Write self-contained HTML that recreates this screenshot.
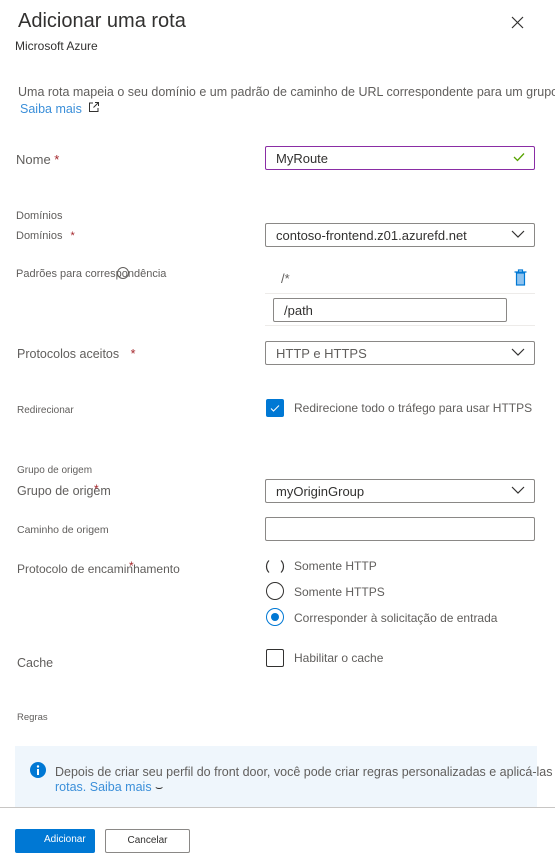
<!DOCTYPE html>
<html><head><meta charset="utf-8"><style>
*{margin:0;padding:0;box-sizing:border-box}
body{width:555px;height:868px;overflow:hidden;background:#fff;font-family:"Liberation Sans",sans-serif;color:#323130;position:relative}
.a{position:absolute;white-space:nowrap}
.lbl{color:#605e5c;font-size:12px}
.req{color:#a4262c}
.box{position:absolute;left:265px;width:270px;height:24px;border:1px solid #8a8886;border-radius:2px;font-size:13px;color:#323130;padding:5px 10px;line-height:14px}
.chev{position:absolute;right:9px;top:6px}
.radio{position:absolute;left:266px;width:18px;height:18px;border:1px solid #323130;border-radius:50%}
.rt{position:absolute;left:294px;font-size:12px;color:#605e5c}
</style></head><body>
<div class="a" style="left:18px;top:10px;font-size:20px;color:#323130">Adicionar uma rota</div>
<svg class="a" style="left:511px;top:16px" width="13" height="13"><path d="M1 1L12 12M12 1L1 12" stroke="#323130" stroke-width="1.2"/></svg>
<div class="a" style="left:15px;top:39px;font-size:12px;color:#323130">Microsoft Azure</div>
<div class="a" style="left:18px;top:85px;font-size:12.5px;color:#605e5c">Uma rota mapeia o seu domínio e um padrão de caminho de URL correspondente para um grupo</div>
<div class="a" style="left:20px;top:102px;font-size:12.5px;color:#3b8fd9">Saiba mais</div>
<svg class="a" style="left:88px;top:101px" width="12" height="12"><path d="M5 2H1.5V10.5H10V7M7 1.5H10.5V5M10.5 1.5L5.5 6.5" stroke="#323130" fill="none" stroke-width="1"/></svg>

<div class="a" style="left:16px;top:152px;font-size:13px;color:#605e5c">Nome <span class="req">*</span></div>
<div class="box" style="top:146px;border-color:#8a2da5">MyRoute<svg class="chev" style="top:5px" width="12" height="10"><path d="M1 5L4.5 8.5L11 1.5" stroke="#57a300" fill="none" stroke-width="1.3"/></svg></div>

<div class="a lbl" style="left:16px;top:210px;font-size:11px">Domínios</div>
<div class="a lbl" style="left:16px;top:230px;font-size:11px">Domínios <span class="req" style="margin-left:5px">*</span></div>
<div class="box" style="top:223px">contoso-frontend.z01.azurefd.net<svg class="chev" width="14" height="9"><path d="M1 1L7 7L13 1" stroke="#323130" fill="none" stroke-width="1.2"/></svg></div>

<div class="a lbl" style="left:16px;top:268px;font-size:11px">Padrões para correspondência</div>
<div class="a" style="left:117px;top:267px;width:12px;height:12px;border:1px solid #605e5c;border-radius:50%"></div>
<div class="a" style="left:281px;top:271px;font-size:13px;color:#605e5c">/*</div>
<svg class="a" style="left:514px;top:269px" width="13" height="17"><rect x="2.5" y="4" width="8" height="12" fill="#8fc3ef" stroke="#0078d4" stroke-width="1.2"/><path d="M0.5 3H12.5M4.5 3V1H8.5V3" stroke="#0078d4" fill="none" stroke-width="1.2"/></svg>
<div class="a" style="left:265px;top:293px;width:270px;height:1px;background:#edebe9"></div>
<div class="box" style="left:273px;width:234px;top:298px">/path</div>
<div class="a" style="left:265px;top:325px;width:270px;height:1px;background:#edebe9"></div>

<div class="a" style="left:17px;top:347px;font-size:12.5px;color:#605e5c">Protocolos aceitos <span class="req" style="margin-left:8px">*</span></div>
<div class="box" style="top:341px;color:#605e5c">HTTP e HTTPS<svg class="chev" width="14" height="9"><path d="M1 1L7 7L13 1" stroke="#323130" fill="none" stroke-width="1.2"/></svg></div>

<div class="a lbl" style="left:17px;top:405px;font-size:10px">Redirecionar</div>
<div class="a" style="left:266px;top:399px;width:18px;height:18px;background:#0078d4;border-radius:2px"><svg width="18" height="18"><path d="M5 9.5L7.5 12L13 6.5" stroke="#fff" fill="none" stroke-width="1"/></svg></div>
<div class="rt" style="top:401px">Redirecione todo o tráfego para usar HTTPS</div>

<div class="a lbl" style="left:17px;top:465px;font-size:10px">Grupo de origem</div>
<div class="a" style="left:17px;top:484px;font-size:12.5px;color:#605e5c">Grupo de origem</div>
<div class="a req" style="left:94px;top:482px;font-size:12px">*</div>
<div class="box" style="top:479px">myOriginGroup<svg class="chev" width="14" height="9"><path d="M1 1L7 7L13 1" stroke="#323130" fill="none" stroke-width="1.2"/></svg></div>

<div class="a lbl" style="left:17px;top:524px;font-size:10.5px">Caminho de origem</div>
<div class="box" style="top:517px"></div>

<div class="a" style="left:17px;top:562px;font-size:12px;color:#605e5c">Protocolo de encaminhamento</div>
<div class="a req" style="left:129px;top:559px;font-size:12px">*</div>
<svg class="a" style="left:265px;top:557px" width="20" height="20"><path d="M4 3.5A8.5 8.5 0 0 0 4 15.5M16 3.5A8.5 8.5 0 0 1 16 15.5" stroke="#323130" fill="none" stroke-width="1.2"/></svg>
<div class="rt" style="top:559px">Somente HTTP</div>
<div class="radio" style="top:582px"></div>
<div class="rt" style="top:585px">Somente HTTPS</div>
<div class="radio" style="top:608px;border-color:#0078d4"><div style="position:absolute;left:4px;top:4px;width:8px;height:8px;border-radius:50%;background:#0078d4"></div></div>
<div class="rt" style="top:611px">Corresponder à solicitação de entrada</div>

<div class="a" style="left:17px;top:656px;font-size:12.5px;color:#605e5c">Cache</div>
<div class="a" style="left:266px;top:649px;width:18px;height:18px;border:1px solid #323130;border-radius:2px"></div>
<div class="rt" style="top:651px">Habilitar o cache</div>

<div class="a lbl" style="left:17px;top:712px;font-size:9.5px">Regras</div>
<div class="a" style="left:15px;top:746px;width:522px;height:62px;background:#eff6fc"></div>
<svg class="a" style="left:30px;top:762px" width="16" height="16"><circle cx="8" cy="8" r="8" fill="#0078d4"/><rect x="7" y="7" width="2" height="6" fill="#fff"/><circle cx="8" cy="4.5" r="1.2" fill="#fff"/></svg>
<div class="a" style="left:55px;top:765px;font-size:12.5px;color:#605e5c">Depois de criar seu perfil do front door, você pode criar regras personalizadas e aplicá-las</div>
<div class="a" style="left:55px;top:780px;font-size:12.5px;color:#3b8fd9">rotas. Saiba mais <span style="color:#323130">⌣</span></div>
<div class="a" style="left:0;top:807px;width:555px;height:1px;background:#c8c6c4"></div>

<div class="a" style="left:15px;top:829px;width:80px;height:24px;background:#0078d4;border-radius:2px;color:#fff;font-size:10px;line-height:22px;padding-left:29px">Adicionar</div>
<div class="a" style="left:105px;top:829px;width:85px;height:24px;border:1px solid #8a8886;border-radius:2px;color:#323130;font-size:10px;line-height:22px;text-align:center">Cancelar</div>
</body></html>
